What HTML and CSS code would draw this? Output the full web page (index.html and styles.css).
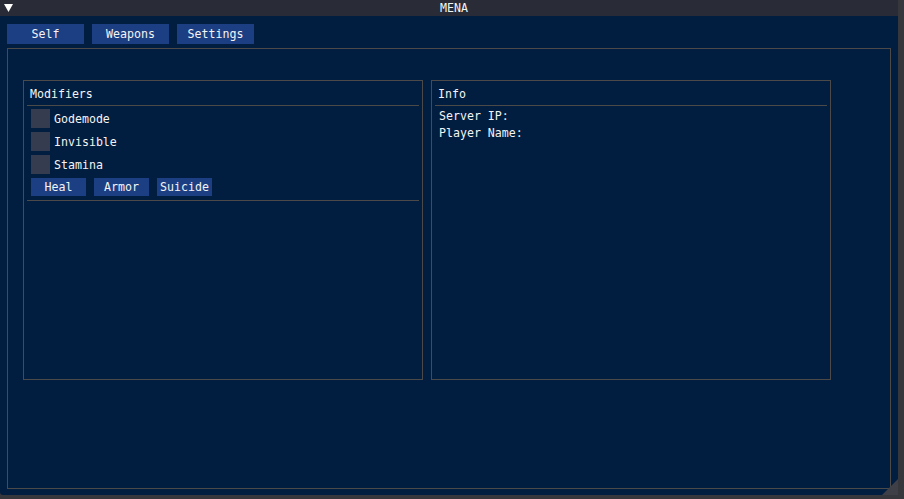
FILE: index.html
```html
<!DOCTYPE html>
<html>
<head>
<meta charset="utf-8">
<link rel="stylesheet" href="styles.css">
</head>
<body>
<div class="window">
  <div class="titlebar">
    <div class="collapse"><svg width="10" height="10" viewBox="0 0 10 10"><polygon points="0,0 9,0 4.5,8" fill="#ffffff"/></svg></div>
    <span class="title">MENA</span>
    <div></div>
  </div>
  <div class="content">
    <div class="tabs">
      <button class="btn tab">Self</button>
      <button class="btn tab">Weapons</button>
      <button class="btn tab">Settings</button>
    </div>
    <div class="frame">
      <div class="panel">
        <div class="panel-title">Modifiers</div>
        <div class="sep"></div>
        <div class="rows">
          <div class="row"><span class="check"></span><span>Godemode</span></div>
          <div class="row"><span class="check"></span><span>Invisible</span></div>
          <div class="row"><span class="check"></span><span>Stamina</span></div>
          <div class="actions">
            <button class="btn small">Heal</button>
            <button class="btn small">Armor</button>
            <button class="btn small">Suicide</button>
          </div>
        </div>
        <div class="sep"></div>
      </div>
      <div class="panel">
        <div class="panel-title">Info</div>
        <div class="sep"></div>
        <div class="info">
          <div class="line">Server IP:</div>
          <div class="line">Player Name:</div>
        </div>
      </div>
    </div>
  </div>
  <svg class="grip" width="16" height="16" viewBox="0 0 16 16"><polygon points="0,16 16,16 16,0" fill="#3e3f47"/></svg>
</div>
</body>
</html>
```
FILE: styles.css
```css
* { box-sizing: border-box; }
html, body {
  margin: 0;
  padding: 0;
  background: #35373d;
  width: 904px;
  height: 499px;
  overflow: hidden;
}
body {
  font-family: "DejaVu Sans Mono", "Liberation Mono", monospace;
  font-size: 11.6px;
  color: #f4f4f4;
}
.window {
  position: relative;
  width: 898px;
  height: 495px;
  background: #011d40;
  border-bottom-left-radius: 3px;
}
.titlebar {
  height: 16px;
  background: #292c37;
  display: grid;
  grid-template-columns: 1fr auto 1fr;
  align-items: center;
  padding-left: 4px;
}
.collapse {
  display: flex;
  align-items: center;
  height: 16px;
  padding-top: 2px;
}
.title {
  padding-left: 6px;
  line-height: 16px;
}
.content {
  padding: 8px 0 0 7px;
}
.tabs {
  display: flex;
  gap: 8px;
  height: 20px;
}
.btn {
  font: inherit;
  color: #f4f4f4;
  background: #1c3f84;
  border: none;
  padding: 0;
  margin: 0;
  text-align: center;
}
.tab {
  width: 77px;
  height: 20px;
  line-height: 20px;
}
.frame {
  margin-top: 4px;
  width: 884px;
  height: 441px;
  border: 1px solid #4b4a48;
  padding: 31px 0 0 15px;
  display: flex;
  gap: 8px;
  align-items: flex-start;
}
.panel {
  width: 400px;
  height: 300px;
  border: 1px solid #4b4a48;
  display: flex;
  flex-direction: column;
}
.panel-title {
  padding: 6px 6px 0;
  height: 21px;
  line-height: 15px;
}
.sep {
  margin: 3px 3px 0;
  height: 1px;
  background: #4b4a48;
}
.rows {
  padding: 3px 0 0 7px;
  display: flex;
  flex-direction: column;
  gap: 4px;
}
.row {
  height: 19px;
  display: flex;
  align-items: center;
  gap: 4px;
}
.check {
  width: 19px;
  height: 19px;
  background: #353c4f;
}
.actions {
  display: flex;
  gap: 8px;
  height: 18px;
}
.small {
  width: 55px;
  height: 18px;
  line-height: 18px;
}
.rows + .sep {
  margin-top: 4px;
}
.info {
  padding: 2px 0 0 7px;
}
.line {
  line-height: 17px;
  height: 17px;
}
.grip {
  position: absolute;
  right: 0;
  bottom: 0;
}
```
